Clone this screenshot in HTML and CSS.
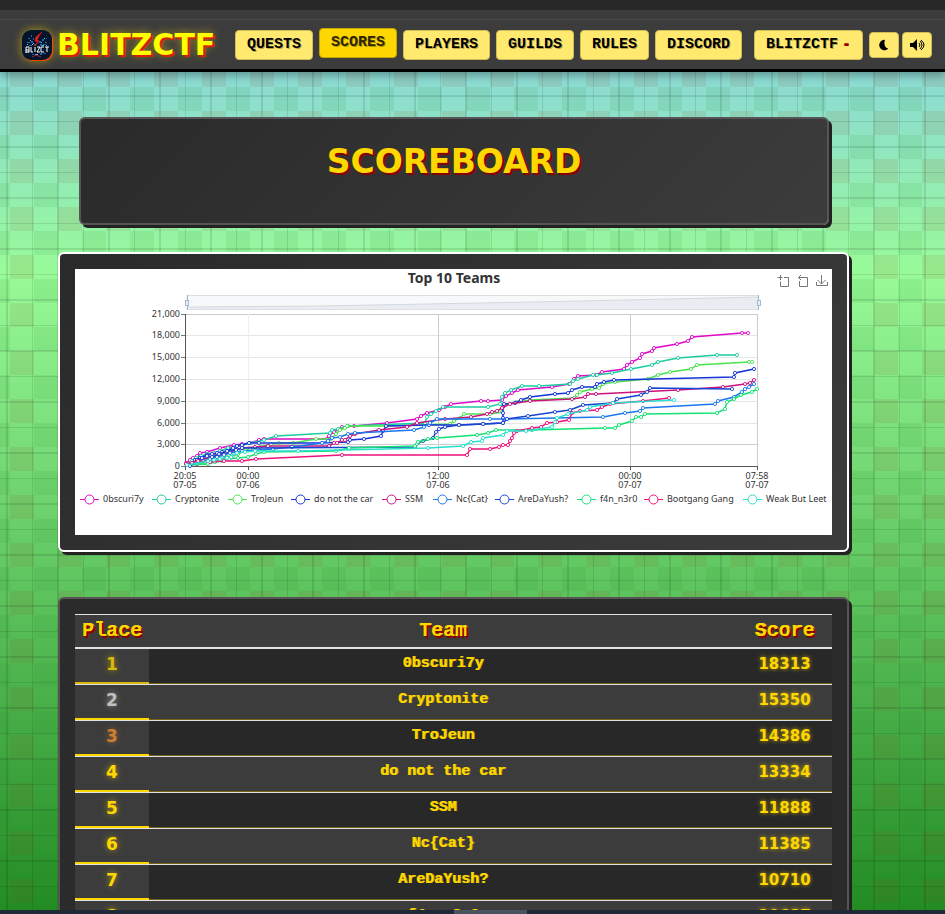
FILE: index.html
```html
<!DOCTYPE html>
<html lang="en">
<head>
<meta charset="utf-8">
<meta name="viewport" content="width=device-width, initial-scale=1">
<title>BlitzCTF</title>
<link rel="stylesheet" href="styles.css">
</head>
<body>
<header class="navbar">
  <a class="brand" href="#">
    <svg class="brand-logo" viewBox="0 0 30 30" aria-hidden="true">
      <rect width="30" height="30" rx="9" fill="#04142b"/>
      <g fill="#1769a8"><path d="M6 8h2v1H6zM9 5h1v2H9zM5 12h3v1H5zM9 11h2v2H9zM20 9h2v2h-2zM23 12h2v1h-2zM21 14h3v1h-3zM7 15h3v1H7zM11 8h1v2h-1zM18 14h2v2h-2zM10 24h2v1h-2zM18 23h2v2h-2zM6 22h2v1H6zM22 23h2v1h-2zM24 8h1v1h-1zM12 14h2v2h-2zM17 11h2v2h-2z"/></g>
      <g fill="#45c4f5"><path d="M8 10h1v1H8zM11 13h1v1h-1zM19 12h1v1h-1zM22 8h1v1h-1zM13 24h3v1h-3zM5 14h1v1H5zM24 15h1v1h-1zM10 14h1v1h-1zM20 15h2v1h-2z"/></g>
      <path d="M20 2l-6 5-1 4 3 1-4 4 2-1 3-4-2-1 2-4z" fill="#ff2a1c" stroke="#c5141b" stroke-width="1"/>
      <path d="M4 17v6m0-6h3v3H4m3 0v2H4M9 17v5h2M13 17v5M15 17h3l-3 5h3M22 17h-3v5h3M23 17h4m-2 0v5" fill="none" stroke="#fff" stroke-width="1"/>
      <path d="M10 27l4-2 5 2" fill="none" stroke="#b32028"/>
    </svg>
    <span class="brand-name">BLITZCTF</span>
  </a>
  <nav class="nav-links">
    <a class="nav-btn" href="#">QUESTS</a>
    <a class="nav-btn active" href="#">SCORES</a>
    <a class="nav-btn" href="#">PLAYERS</a>
    <a class="nav-btn" href="#">GUILDS</a>
    <a class="nav-btn" href="#">RULES</a>
    <a class="nav-btn" href="#">DISCORD</a>
  </nav>
  <div class="nav-user">
    <a class="nav-btn" href="#">BLITZCTF<span class="dash">-</span></a>
    <div class="nav-tools">
      <button class="icon-btn" type="button" aria-label="Toggle theme">
        <svg viewBox="0 0 16 16" width="14" height="14"><path d="M9 2A6 6 0 1 0 13 12Q7 11 9 2z" fill="#000"/></svg>
      </button>
      <button class="icon-btn" type="button" aria-label="Toggle sound">
        <svg viewBox="0 0 16 16" width="16" height="16"><path d="M1 6h3l4-4v12l-4-4H1z" fill="#000"/><path d="M10 6q2 2 0 4M11 4q4 4 0 8M12 3q6 5 0 10" fill="none" stroke="#000"/></svg>
      </button>
    </div>
  </div>
</header>
<main class="page">
  <section class="hero"><h1>SCOREBOARD</h1></section>
  <section class="panel chart-panel">
    <svg id="chart" class="chart" viewBox="75 269 757 266" role="img" aria-label="Top 10 Teams">
      <rect x="75" y="269" width="757" height="266" fill="#fff"/>
      <text class="chart-title" x="454" y="283">Top 10 Teams</text>
      <g class="tool-icons">
        <path d="M777.5 277.5h5M780.5 275v5M784 277.5h4.500v9h-8v-5"/>
        <path d="M799.5 281v5.500h8v-9h-9M801 275l-2.500 2.500 2.500 2.500"/>
        <path d="M821.5 275v9M817.500 280l4 4 4-4M816.500 282v3.500h11v-3.500"/>
      </g>
      <rect x="187" y="295.5" width="571" height="14" fill="#f7f8fa" stroke="#dcdfe3"/>
      <path d="M188 307L320 306 480 303 580 301 758 297V309H188z" fill="#e9ecf0"/>
      <path d="M188 307L320 306 480 303 580 301 758 297" fill="none" stroke="#d4d9df"/>
      <g stroke="#a3b9d3" fill="#e5edf7"><path d="M187.5 295v15M758.5 295v15"/><rect x="185.5" y="300.5" width="3" height="5"/><rect x="757.5" y="300.5" width="3" height="5"/></g>
      <g id="grid"></g>
      <g id="series"></g>
      <g id="legend"></g>
    </svg>
  </section>
  <section class="panel table-panel">
    <table class="scores">
      <thead><tr><th class="place">Place</th><th>Team</th><th class="score">Score</th></tr></thead>
      <tbody>
        <tr class="gold"><th>1</th><td>0bscuri7y</td><td>18313</td></tr>
        <tr class="silver"><th>2</th><td>Cryptonite</td><td>15350</td></tr>
        <tr class="bronze"><th>3</th><td>TroJeun</td><td>14386</td></tr>
        <tr><th>4</th><td>do not the car</td><td>13334</td></tr>
        <tr><th>5</th><td>SSM</td><td>11888</td></tr>
        <tr><th>6</th><td>Nc{Cat}</td><td>11385</td></tr>
        <tr><th>7</th><td>AreDaYush?</td><td>10710</td></tr>
        <tr><th>8</th><td>f4n_n3r0</td><td>10687</td></tr>
      </tbody>
    </table>
  </section>
</main>
<div class="scrollbar"><div class="thumb"></div></div>
<script src="chart.js"></script>
</body>
</html>
```
FILE: styles.css
```css
* { box-sizing: border-box; }

body {
  margin: 0;
  height: 100vh;
  display: flex;
  flex-direction: column;
  overflow: hidden;
  font-family: "Liberation Mono", monospace;
  font-weight: 700;
  /* pixel-block sky: grid lines, brown and green checks, sky-to-grass fade */
  background-image:
    linear-gradient(90deg, rgba(0,0,0,.1) 2px, transparent 2px 26px, rgba(0,0,0,.1) 26px 27px, transparent 27px),
    linear-gradient(180deg, rgba(0,0,0,.1) 2px, transparent 2px 26px, rgba(0,0,0,.1) 26px 27px, transparent 27px),
    conic-gradient(rgba(139,69,19,.1) 25%, transparent 0),
    conic-gradient(rgba(34,139,34,.1) 25%, transparent 0),
    linear-gradient(180deg, #87ceeb 0%, #98fb98 30%, #228b22 100%);
  background-size: 51px 51px, 51px 51px, 48px 48px, 48px 48px, 100% 100%;
  background-position: 6px 0, 0 44px, 34px 15px, 10px 39px, 0 0;
  background-repeat: repeat, repeat, repeat, repeat, no-repeat;
}

.navbar {
  flex: none;
  display: flex;
  align-items: center;
  height: 72px;
  padding: 20px 13px 0 22px;
  border-bottom: 3px solid #000;
  background: linear-gradient(#282828 0 10px, #3c3c3c 10px 19px, #494949 19px 20px, #3c3c3c 20px);
  box-shadow: 0 4px 8px rgba(0,0,0,.3);
}

.brand {
  display: flex;
  align-items: center;
  gap: 5px;
  width: 213px;
  color: #ff0;
  text-decoration: none;
}

.brand-logo {
  flex: none;
  width: 30px;
  height: 30px;
  border-radius: 9px;
  box-shadow: 1px 1px 0 #ff4500, 0 0 10px rgba(255,215,0,.6);
}

.brand-name {
  font: 700 30px/30px "DejaVu Sans", sans-serif;
  text-shadow: 2px 2px 0 #d81e05, 0 0 9px rgba(255,215,0,.6);
}

.nav-links { display: flex; gap: 6px; }

.nav-user { display: flex; align-items: center; gap: 6px; margin-left: auto; }

.nav-tools { display: flex; gap: 3px; }

.nav-btn {
  padding: 0 11px;
  border: 1px solid #d0bd58;
  border-radius: 4px;
  background: #ffe96f;
  color: #000;
  font-size: 15px;
  line-height: 28px;
  text-decoration: none;
  text-shadow: 1px 1px 0 rgba(0,0,0,.3);
  white-space: nowrap;
}

.nav-btn.active {
  border-color: #c4a500;
  background: #ffd700;
  color: #2c2500;
  transform: translateY(-2px);
}

.dash { margin-left: 4px; color: #a00000; text-shadow: 0 1px 0 #a00000; }

.icon-btn {
  display: grid;
  place-items: center;
  width: 30px;
  height: 26px;
  padding: 0;
  border: 1px solid #d0bd58;
  border-radius: 4px;
  background: #ffe96f;
}

.page {
  flex: 1;
  min-height: 0;
  overflow: hidden;
  padding: 45px 96px 0 58px;
}

.hero {
  height: 108px;
  margin: 0 20px 27px 21px;
  border: 2px solid #555;
  border-radius: 6px;
  background: linear-gradient(135deg, #2a2a2a, #3c3c3c);
  box-shadow: 3px 3px 0 #222;
  text-align: center;
}

h1 {
  margin: 23px 0 0;
  font: 700 33px/40px "DejaVu Sans", sans-serif;
  color: #ffd700;
  text-shadow: 2px 2px 0 #8b0000;
}

.panel {
  padding: 15px;
  border: 2px solid #555;
  border-radius: 6px;
  background: linear-gradient(135deg, #2a2a2a, #3c3c3c);
  box-shadow: 3px 3px 0 #222;
}

.chart-panel { border-color: #fff; margin-bottom: 45px; }

.chart { display: block; width: 100%; height: auto; font: 400 9px "Noto Sans", sans-serif; fill: #333; }
.chart-title { font-size: 14px; font-weight: 700; text-anchor: middle; }
.tool-icons { fill: none; stroke: #777; }
.axis-y { text-anchor: end; }
.axis-x { text-anchor: middle; }

.table-panel { background: #2b2b2b; }

.scores { width: 100%; border-collapse: separate; border-spacing: 0; table-layout: fixed; color: #ffd700; }
.scores th, .scores td { padding: 0; text-align: center; }
.scores thead th {
  height: 35px;
  border-top: 1px solid #dee2e6;
  border-bottom: 2px solid #dee2e6;
  background: #3c3c3c;
  font-size: 20px;
  line-height: 32px;
  text-shadow: 2px 2px 0 #8b0000, 1px 0 0 #ffd700;
}
.scores .place { width: 74px; }
.scores .score { width: 95px; }
.scores tbody th, .scores tbody td {
  height: 36px;
  padding-bottom: 5px;
  border-bottom: 1px solid #dee2e6;
  line-height: 28px;
}
.scores tbody tr { background: #3c3c3c; }
.scores tbody tr:nth-child(odd) { background: #282828; }
.scores tbody td { font-size: 15px; box-shadow: inset 0 -1px 0 #736315; text-shadow: 1px 0 0 #cba900; }
.scores tbody th {
  background: #3c3c3c;
  font: 700 17px/28px "DejaVu Sans", sans-serif;
  box-shadow: inset 0 -2px 0 #ffd700;
  text-shadow: 0 0 6px rgba(255,215,0,.6);
}
.scores tbody td:last-child {
  font: 700 15px/28px "DejaVu Sans", sans-serif;
  text-shadow: 0 0 4px rgba(255,215,0,.7);
}
.scores .gold th { color: #dbb90b; box-shadow: inset 0 -2px 0 #dbb90b; }
.scores .silver th { color: #c0c0c0; text-shadow: 0 0 6px rgba(192,192,192,.6); }
.scores .bronze th { color: #cd7f32; text-shadow: 0 0 6px rgba(205,127,50,.6); }

.scrollbar { flex: none; display: flex; justify-content: center; height: 4px; padding-left: 36px; background: #1f2a36; }
.thumb { width: 73px; background: #4a545e; }
```
FILE: chart.js
```javascript
const NS = "http://www.w3.org/2000/svg";

function add(parent, name, attrs, text) {
  const el = document.createElementNS(NS, name);
  for (const key in attrs) el.setAttribute(key, attrs[key]);
  if (text) el.textContent = text;
  parent.appendChild(el);
}

const grid = document.getElementById("grid");
const rows = [[314, "21,000"], [335, "18,000"], [357, "15,000"], [379, "12,000"], [401, "9,000"], [423, "6,000"], [444, "3,000"], [466, "0"]];
rows.forEach(([y, label], i) => {
  const strong = i === 0 || i === 6;
  add(grid, "path", { d: `M186 ${y}.5H757`, stroke: strong ? "#ccc" : "#e6e6e6" });
  add(grid, "path", { d: `M181 ${y}.5h5`, stroke: "#777" });
  add(grid, "text", { x: 180, y: y + 3, class: "axis-y" }, label);
});
[[185, "20:05", "07-05"], [248, "00:00", "07-06"], [438, "12:00", "07-06"], [630, "00:00", "07-07"], [757, "07:58", "07-07"]].forEach(([x, time, day], i) => {
  if (i) add(grid, "path", { d: `M${x}.5 314V466`, stroke: i === 1 ? "#eee" : "#ccc" });
  add(grid, "path", { d: `M${x}.5 466v4`, stroke: "#555" });
  add(grid, "text", { x, y: 479, class: "axis-x" }, time);
  add(grid, "text", { x, y: 488, class: "axis-x" }, day);
});
add(grid, "path", { d: "M185.5 314V466.5H757", fill: "none", stroke: "#555" });

const teams = [
  ["0bscuri7y", "#dd0bc8", 80, "186,463 190,460 193,458 197,456 200,453 207,452 220,448 234,445 242,444 250,443 259,440 264,439 327,439 329,436 334,432 342,427 354,426 387,423 417,419 421,416 427,413 439,410 445,407 451,404 481,401 488,401 502,400 506,396 512,393 518,390 552,387 569,384 574,379 578,376 596,375 602,372 624,369 627,365 632,362 640,358 642,354 652,351 654,348 677,344 688,341 692,337 742,333 748,333"],
  ["Cryptonite", "#1dcda1", 152, "187,464 192,461 196,458 201,456 207,454 214,453 220,451 228,448 235,447 243,445 250,443 264,440 276,436 330,433 332,430 338,429 348,426 425,423 427,417 431,414 436,411 443,407 488,407 500,404 502,397 505,393 511,390 522,386 539,386 570,384 573,381 578,379 593,375 597,375 612,373 631,369 652,365 658,362 678,358 717,355 737,355"],
  ["TroJeun", "#49e34d", 228, "188,465 208,464 215,461 220,459 227,457 233,456 238,454 244,451 250,449 260,447 271,444 279,443 293,443 316,439 331,439 336,434 340,430 345,428 347,426 387,426 450,424 454,421 460,418 464,414 490,414 502,412 503,405 516,402 530,400 574,398 577,395 580,392 592,389 599,388 603,384 615,382 648,379 658,375 670,372 691,369 697,365 749,362 752,362"],
  ["do not the car", "#1733dc", 291, "189,465 195,460 200,458 207,455 212,454 217,453 222,452 227,451 233,448 237,446 242,445 249,443 259,443 322,443 348,442 350,440 364,439 381,436 383,431 386,426 429,425 459,425 483,424 503,423 503,418 503,413 503,407 504,404 515,403 521,400 530,397 555,394 568,393 572,390 582,387 595,387 597,384 604,382 614,380 734,377 735,373 754,369"],
  ["SSM", "#cc127c", 382, "187,464 196,462 203,459 210,458 216,456 224,454 230,452 236,450 242,448 255,447 268,446 329,446 334,443 337,443 342,440 345,440 350,436 355,434 379,430 407,427 417,423 445,419 471,417 487,414 492,412 497,411 502,408 510,404 530,401 572,399 585,397 588,394 596,394 678,390 723,387 745,384 750,383 754,380"],
  ["Nc{Cat}", "#1b77ed", 433, "190,465 197,464 203,461 210,459 217,457 224,455 230,453 236,452 242,451 273,449 292,447 322,443 328,441 332,438 340,437 348,434 355,433 414,430 424,427 430,423 437,419 490,419 507,419 603,417 625,413 640,411 643,408 715,404 718,401 734,397 742,392 745,389 749,387 754,384"],
  ["AreDaYush?", "#1745cf", 495, "190,466 197,460 202,458 207,456 212,457 219,454 227,451 236,450 242,448 415,447 418,443 423,441 433,438 436,432 439,429 445,427 459,425 483,424 503,423 507,419 528,416 555,412 570,410 583,405 613,403 617,399 641,395 647,392 650,388 732,389"],
  ["f4n_n3r0", "#14e273", 577, "186,464 208,464 215,462 222,461 229,459 238,458 248,457 256,454 264,452 336,451 349,448 415,446 417,444 418,442 428,439 437,438 477,435 488,433 496,430 532,430 605,428 615,428 619,425 632,421 636,417 641,417 645,414 717,413 725,409 727,402 734,399 741,395 752,392 757,389"],
  ["Bootgang Gang", "#ef117b", 644, "186,464 192,463 198,461 210,462 224,461 242,461 256,459 342,455 467,455 470,449 490,449 499,447 503,445 508,445 510,441 512,438 514,433 517,431 532,428 541,427 547,423 557,422 569,420 572,413 580,411 597,410 602,407 610,404 643,401 669,398"],
  ["Weak But Leet", "#27dfcd", 743, "187,465 208,461 214,460 220,459 227,458 231,457 237,453 245,452 255,451 298,451 428,448 463,446 471,442 482,441 483,438 503,435 507,431 526,431 552,427 555,422 557,418 568,414 587,410 590,407 613,403 674,400"]
];

const series = document.getElementById("series");
const legend = document.getElementById("legend");
teams.forEach(([name, color, x, points]) => {
  add(series, "polyline", { points, fill: "none", stroke: color, "stroke-width": 1.5 });
  points.split(" ").forEach(point => {
    const [cx, cy] = point.split(",");
    add(series, "circle", { cx, cy, r: 1.6, fill: "#fff", stroke: color, "stroke-width": 0.9 });
  });
  add(legend, "path", { d: `M${x} 499.5h19`, stroke: color });
  add(legend, "circle", { cx: x + 9.5, cy: 499.5, r: 4.5, fill: "#fff", stroke: color });
  add(legend, "text", { x: x + 23, y: 502 }, name);
});
```
